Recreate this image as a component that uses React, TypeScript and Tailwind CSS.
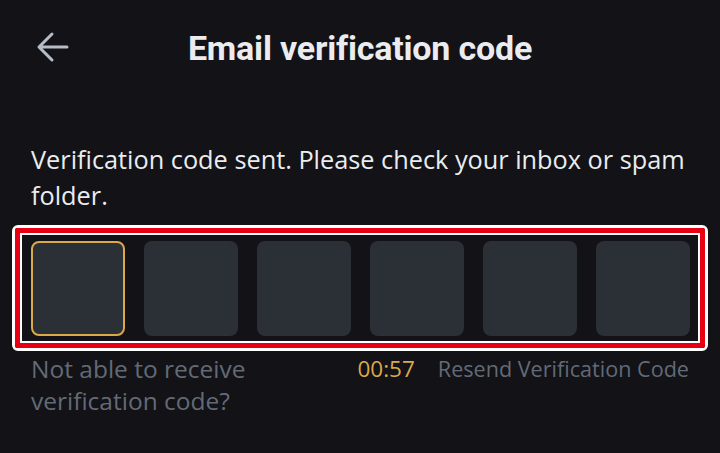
import React from "react";

export default function App() {
  const cells = [0, 1, 2, 3, 4, 5];
  return (
    <div
      className="w-[720px] h-[453px] bg-[#121217] overflow-hidden"
      style={{ fontFamily: "'Open Sans', 'Liberation Sans', sans-serif" }}
    >
      <div className="relative flex items-center justify-center h-[96px]">
        <div className="absolute left-[36px] top-[31px]">
          <svg width="34" height="32" viewBox="0 0 34 32" fill="none">
            <path
              d="M31 16H4M16 3L3 16L16 29"
              stroke="#b7bdc6"
              strokeWidth="3"
              strokeLinecap="round"
              strokeLinejoin="round"
            />
          </svg>
        </div>
        <h1
          className="text-[34px] font-bold text-[#eaecef] leading-none tracking-[-0.2px]"
          style={{ fontFamily: "Roboto, 'Liberation Sans', sans-serif" }}
        >
          Email verification code
        </h1>
      </div>

      <p className="px-[31px] mt-[45px] text-[25.3px] leading-[36px] text-[#eaecef]">
        Verification code sent. Please check your inbox or spam folder.
      </p>

      <div className="mx-[12px] mt-[12px] border-[3px] border-white rounded-[6px]">
        <div className="border-[5px] border-[#e60012] rounded-[2px]">
          <div className="border-2 border-white">
            <div className="flex gap-[19px] pl-[9px] pt-[6px] pb-[5px] overflow-hidden">
              {cells.map((i) => (
                <div
                  key={i}
                  className={
                    i === 0
                      ? "shrink-0 w-[94px] h-[95px] rounded-[8px] bg-[#2b2f36] border-2 border-[#d9a94a]"
                      : "shrink-0 w-[94px] h-[95px] rounded-[8px] bg-[#2b2f36]"
                  }
                />
              ))}
            </div>
          </div>
        </div>
      </div>

      <div className="flex justify-between px-[31px] pt-[2px]">
        <p className="w-[300px] text-[24.5px] leading-[32px] text-[#626a76]">
          Not able to receive verification code?
        </p>
        <div className="flex items-baseline gap-[23px] leading-[32px]">
          <span className="text-[22.5px] text-[#d9a94a]">00:57</span>
          <span className="text-[21.6px] text-[#626a76]">Resend Verification Code</span>
        </div>
      </div>
    </div>
  );
}
